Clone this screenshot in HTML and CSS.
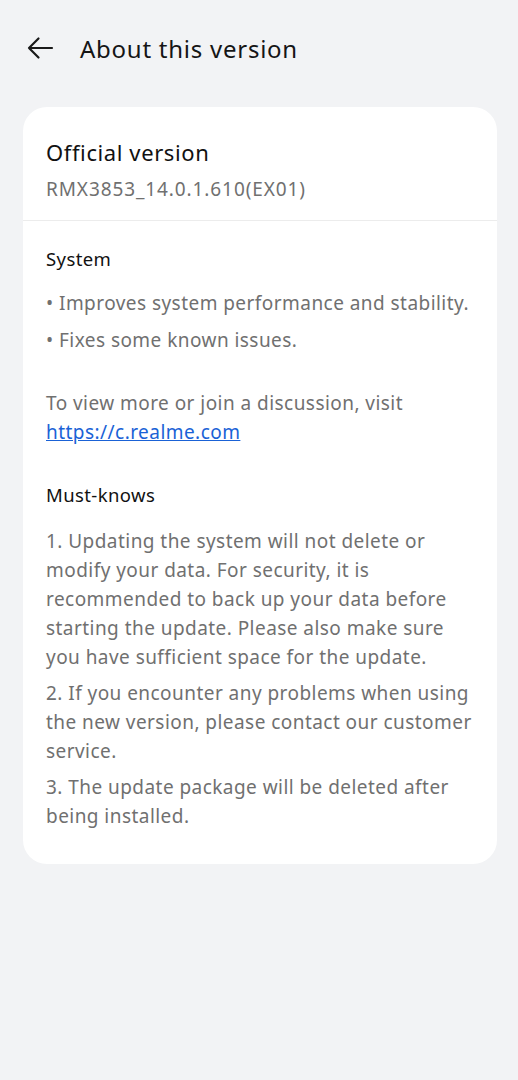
FILE: index.html
```html
<!DOCTYPE html>
<html>

<head>
    <title>About this version</title>
    <link rel="stylesheet" href="styles.css">
</head>

<body>
    <div class="header">
        <button class="back" aria-label="Back">
            <svg width="28" height="28" viewBox="0 0 28 28">
                <path d="M26 14H3M12.5 4.5L3 14L12.5 23.5" fill="none" stroke="#1a1a1a" stroke-width="2.2" stroke-linecap="round" stroke-linejoin="round" />
            </svg>
        </button>
        <h1 class="title">About this version</h1>
    </div>

    <div class="card">
        <div class="version">
            <p class="version-name">Official version</p>
            <p class="version-code">RMX3853_14.0.1.610(EX01)</p>
        </div>

        <div class="notes">
            <p class="heading">System</p>
            <ul class="bullets">
                <li>• Improves system performance and stability.</li>
                <li>• Fixes some known issues.</li>
            </ul>
            <p class="visit">To view more or join a discussion, visit <a href="#">https://c.realme.com</a></p>

            <p class="heading">Must-knows</p>
            <ol class="steps">
                <li>1. Updating the system will not delete or modify your data. For security, it is recommended to back up your data before starting the update. Please also make sure you have sufficient space for the update.</li>
                <li>2. If you encounter any problems when using the new version, please contact our customer service.</li>
                <li>3. The update package will be deleted after being installed.</li>
            </ol>
        </div>
    </div>
</body>

</html>
```

FILE: styles.css
```css
body {
    margin: 0;
    background-color: #f2f3f5;
    font-family: "Noto Sans", "Open Sans", sans-serif;
    color: #111;
}

p {
    margin: 0;
}

.header {
    display: flex;
    align-items: center;
    height: 96px;
    padding-left: 26px;
    margin-bottom: 11px;
}

.back {
    display: flex;
    padding: 0;
    border: none;
    background: none;
    width: 28px;
    height: 28px;
    margin-right: 26px;
}

.title {
    margin: 0;
    font-size: 24px;
    font-weight: 400;
    letter-spacing: 0.75px;
    color: #151515;
}

.card {
    margin: 0 21px 0 23px;
    background-color: #fff;
    border-radius: 24px;
    padding-bottom: 33px;
}

.version {
    padding: 30px 23px 17px;
    border-bottom: 1px solid #ececec;
}

.version-name {
    font-size: 22px;
    line-height: 30px;
    letter-spacing: 0.6px;
    color: #111;
}

.version-code {
    margin-top: 8px;
    font-size: 19px;
    line-height: 28px;
    letter-spacing: 0.9px;
    color: #707070;
}

.notes {
    padding: 24px 20px 0 23px;
}

.heading {
    font-size: 18.5px;
    line-height: 28px;
    letter-spacing: 0.4px;
    color: #111;
}

.bullets {
    list-style: none;
    margin: 16px 0 0;
    padding: 0;
    display: flex;
    flex-direction: column;
    gap: 9px;
}

.bullets li,
.visit,
.steps li {
    font-size: 19px;
    line-height: 29px;
    letter-spacing: 0.45px;
    color: #707070;
}

.bullets li {
    line-height: 28px;
}

.visit {
    margin: 35px 0 34px;
}

.visit a {
    color: #1a62d6;
}

.steps {
    list-style: none;
    margin: 18px 0 0;
    padding: 0;
    display: flex;
    flex-direction: column;
    gap: 7px;
}
```
